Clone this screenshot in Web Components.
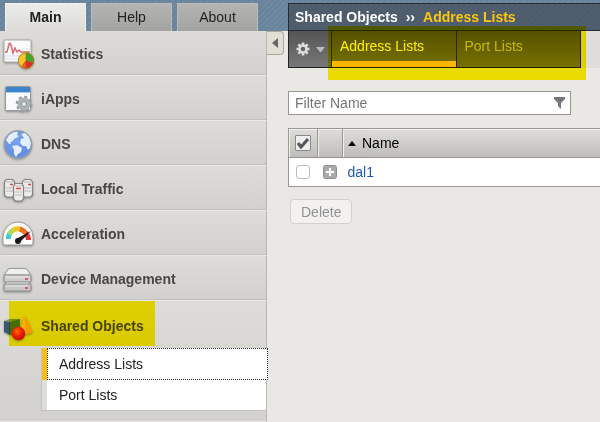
<!DOCTYPE html>
<html lang="en">
<head>
<meta charset="utf-8">
<meta name="viewport" content="width=device-width, initial-scale=1">
<title>Shared Objects - Address Lists</title>
<style>
  body {
    margin: 0;
    min-height: 100vh;
    font: 14px/18px "Liberation Sans", Arial, sans-serif;
    color: #222;
    background: #e9e8e4;
  }
</style>
</head>
<body>
<admin-shell>
  <side-tabs slot="side"></side-tabs>
  <side-nav slot="side">
    <nav-item label="Statistics" icon="statistics"></nav-item>
    <nav-item label="iApps" icon="iapps"></nav-item>
    <nav-item label="DNS" icon="dns"></nav-item>
    <nav-item label="Local Traffic" icon="traffic"></nav-item>
    <nav-item label="Acceleration" icon="acceleration"></nav-item>
    <nav-item label="Device Management" icon="device"></nav-item>
    <nav-item label="Shared Objects" icon="shared" open>
      <sub-link label="Address Lists" current></sub-link>
      <sub-link label="Port Lists"></sub-link>
    </nav-item>
  </side-nav>
  <page-header section="Shared Objects" page="Address Lists"></page-header>
  <page-menu></page-menu>
  <name-filter></name-filter>
  <object-table></object-table>
</admin-shell>

<script>
const icons = {
  statistics: `
    <rect x="2" y="4" width="27" height="22" rx="1" fill="#fafafa" stroke="#aaa"/>
    <path d="M3 20h25M3 23h25" stroke="#cfdcec"/>
    <path d="M3 16h2l2-8q1-2 2 1l2 8 2-5 2 4 2-2 2 2h9" fill="none" stroke="#dc6972" stroke-width="1.5"/>
    <circle cx="24" cy="24.5" r="8" fill="#f4c62b"/>
    <path d="M24 24.5V16.5a8 8 0 0 1 8 8a8 8 0 0 1-.6 2.5z" fill="#43a52e"/>
    <path d="M24 24.5l7.4 2.5a8 8 0 0 1-8.4 5.5z" fill="#da2f20"/>
    <path d="M24 24.5L19 31a8 8 0 0 0 5 1.5z" fill="#eb6022"/>
    <path d="M24 24.5V17M24 24.5l7 2M24 24.5L19 31" stroke="#8b5f13" stroke-width=".5"/>
    <circle cx="24" cy="24.5" r="7.7" fill="none" stroke="#a66b20" stroke-width=".7"/>`,
  iapps: `
    <rect x="3.5" y="5.5" width="25" height="24" rx="1" fill="#f8fafc" stroke="#999"/>
    <path d="M4 6h24v5H4z" fill="#3d84cc"/>
    <path d="M4 11h24v1H4z" fill="#a5c8e8"/>
    <circle cx="22" cy="23" r="7" fill="none" stroke="#929c9d" stroke-width="2.6" stroke-dasharray="2.9 2.6"/>
    <circle cx="22" cy="23" r="4.6" fill="#dde1df" stroke="#a9b3b3" stroke-width="4"/>
    <circle cx="22" cy="23" r="2.5" fill="#e3e7e7" stroke="#879394"/>`,
  dns: `
    <radialGradient id="sea" cx=".4" cy=".3" r=".8"><stop stop-color="#7ba4ef"/><stop offset="1" stop-color="#5a89e0"/></radialGradient>
    <circle cx="16" cy="18.5" r="13.5" fill="url(#sea)" stroke="#8a9cba" stroke-width="1.5"/>
    <path d="M4 14l3-5 5-3 4 0-1 3 2 1-3 2-2 1-2 3-2 0 1 2-2 0z" fill="#e4eefc"/>
    <path d="M10 20l5-1 5 3-1 4-3 2-2 3-2-3 0-4z" fill="#e4eefc"/>
    <path d="M19 8l4-1 4 4 2 6-1 5-2 2-2-4-3 0-3-3 1-4 3-1z" fill="#e4eefc"/>`,
  traffic: `
    <g fill="#ecebea" stroke="#858585" stroke-width="1.2">
      <path d="M2.500 11l2-2.500h6l2 2.500v13l-2 2h-6l-2-2z"/>
      <path d="M20.500 11l2-2.500h6l2 2.500v13l-2 2h-6l-2-2z"/>
      <path d="M11.500 15l2-2.500h6l2 2.500v13l-2 2h-6l-2-2z"/>
    </g>
    <path d="M4 11h7M4 17h7M4 20h7M22 11h7M22 17h7M22 20h7M13 15h7M13 21h7M13 24h7" stroke="#bbb"/>
    <path d="M8 13.500h3M26 13.500h3M14 17.500h5" stroke="#e14941" stroke-width="1.500"/>`,
  acceleration: `
    <path d="M1 27v-6a15 15 0 0 1 30 0v6l-1 2H2z" fill="#fdfdfd" stroke="#999"/>
    <g fill="none" stroke-width="5">
      <path d="M6.500 23a9.500 9.500 0 0 1 1-5" stroke="#46cad2"/>
      <path d="M7.500 18a9.500 9.500 0 0 1 4-4" stroke="#a6df55"/>
      <path d="M11.500 14a9.500 9.500 0 0 1 6-1" stroke="#f4c31c"/>
      <path d="M17.500 13a9.500 9.500 0 0 1 6 4" stroke="#f06f21"/>
      <path d="M23.500 17a9.500 9.500 0 0 1 3 7" stroke="#e63131"/>
    </g>
    <path d="M29 15L19 25a3 3 0 1 1-3-3z" fill="#171717"/>`,
  device: `
    <path d="M2 14l5-6.500h17l5 6.500z" fill="#efefee" stroke="#999"/>
    <rect x="2" y="14" width="27" height="7" rx="1.5" fill="#cfcfce" stroke="#8c8c8c"/>
    <path d="M2 23.500l3-2.500h21l3 2.500z" fill="#eee" stroke="#999"/>
    <rect x="2" y="23" width="27" height="7" rx="1.5" fill="#c7c7c6" stroke="#8c8c8c"/>
    <path d="M4 16h22M4 25h22" stroke="#e7e7e7"/>
    <path d="M23 18h3M23 27h3" stroke="#d9385b" stroke-width="1.5"/>`,
  shared: `
    <radialGradient id="ball" cx=".4" cy=".35" r=".65"><stop stop-color="#ff776a"/><stop offset=".5" stop-color="#ef2315"/><stop offset="1" stop-color="#c51108"/></radialGradient>
    <path d="M22.500 8Q23.500 8 24 10l7 14q-6 4-13 1l3.500-15z" fill="#f5a629"/>
    <path d="M22.500 8l1 17-5.500 0 3.500-15z" fill="#fbc13f"/>
    <path d="M2 13l6-2h10l-3 3z" fill="#6f9b6d"/>
    <path d="M2 13l6 1v13l-6-3z" fill="#39577c"/>
    <path d="M8 14l10-3v14l-10 2z" fill="#47733c"/>
    <circle cx="16.500" cy="25.500" r="6.800" fill="url(#ball)"/>`
};

// Attaches an open shadow root holding the given markup
function render(el, html) {
  el.attachShadow({ mode: 'open' }).innerHTML = html;
}

class AdminShell extends HTMLElement {
  constructor() {
    super();
    render(this, `
      <style>
        :host {
          display: flex;
          min-height: 100vh;
          background:
            repeating-linear-gradient(135deg, #69839c 0 2px, #6f89a1 2px 4px) 0 0 / 100% 31px no-repeat,
            #e9e8e4;
        }
        aside { flex: 0 0 267px; display: flex; flex-direction: column; }
        main { flex: 1; min-width: 0; padding: 3px 0 16px 4px; }
        button {
          flex: none;
          width: 17px;
          height: 24px;
          margin-top: 31px;
          padding: 0;
          border: 1px solid #aaa99f;
          border-left: 0;
          border-radius: 0 4px 4px 0;
          background: #e0dfd5;
        }
        svg { display: block; margin: auto; }
      </style>
      <aside><slot name="side"></slot></aside>
      <button aria-label="Collapse menu">
        <svg width="8" height="10"><path d="M7 0v10L1 5z" fill="#666"/></svg>
      </button>
      <main><slot></slot></main>
    `);
  }
}

class SideTabs extends HTMLElement {
  constructor() {
    super();
    render(this, `
      <style>
        :host { display: block; }
        nav { display: flex; gap: 5px; padding: 3px 9px 0 5px; }
        a {
          flex: 1;
          box-sizing: border-box;
          height: 28px;
          padding-top: 4px;
          border: 1px solid #b9bbba;
          border-bottom: 0;
          text-align: center;
          text-decoration: none;
          color: #222;
          background: linear-gradient(#b4b4b2, #a3a3a1);
        }
        .current {
          border-color: #f0f0ee;
          font-weight: bold;
          background: linear-gradient(#ebebe9, #dddcd8);
        }
      </style>
      <nav>
        <a class="current" href="#main">Main</a>
        <a href="#help">Help</a>
        <a href="#about">About</a>
      </nav>
    `);
  }
}

class SideNav extends HTMLElement {
  constructor() {
    super();
    render(this, `
      <style>
        :host { display: flex; flex-direction: column; flex: 1; }
      </style>
      <slot></slot>
    `);
  }
}

class NavItem extends HTMLElement {
  constructor() {
    super();
    const label = this.getAttribute('label');
    const icon = icons[this.getAttribute('icon')];
    const open = this.hasAttribute('open');

    render(this, `
      <style>
        :host {
          display: block;
          border-right: 1px solid #b8b7b3;
          border-bottom: 1px solid #e9e8e5;
          background: linear-gradient(#dddcd8, #d2d1cd);
          box-shadow: inset 0 -1px #c2c1bd;
        }
        :host([open]) { padding-bottom: 10px; box-shadow: none; }
        button {
          display: flex;
          align-items: center;
          gap: 5px;
          box-sizing: border-box;
          width: 100%;
          height: 44px;
          padding: 2px 0 0 2px;
          border: 0;
          background: none;
          font: inherit;
          font-weight: bold;
          color: #484743;
          text-align: left;
        }
        :host([open]) button { height: 47px; }
        svg { flex: none; filter: drop-shadow(0 1px 1px #0005); }
        .head { position: relative; }
        .marked::after {
          content: "";
          position: absolute;
          inset: 0 111px 2px 9px;
          background: #fff000;
          mix-blend-mode: multiply;
          pointer-events: none;
        }
        .sub { margin: 0 0 0 41px; border-bottom: 1px solid #c2c2bf; }
      </style>
      <div class="head ${open ? 'marked' : ''}">
        <button aria-expanded="${open}">
          <svg width="34" height="36" viewBox="0 0 34 36" aria-hidden="true">${icon}</svg>
          ${label}
        </button>
      </div>
      <div class="sub"><slot></slot></div>
    `);
    if (!open) this.shadowRoot.querySelector('.sub').remove();
  }
}

class SubLink extends HTMLElement {
  constructor() {
    super();
    render(this, `
      <style>
        :host { display: block; padding-left: 5px; border-left: 1px solid #c2c2bf; background: #dededc; }
        :host([current]) { margin-right: -2px; background: #fdbb12; }
        a {
          display: block;
          padding: 6px 11px;
          color: #222;
          text-decoration: none;
          background: #fff;
        }
        :host([current]) a { border: 1px dotted #333; }
        :host(:not([current])) a { padding-left: 12px; }
      </style>
      <a href="#">${this.getAttribute('label')}</a>
    `);
  }
}

class PageHeader extends HTMLElement {
  constructor() {
    super();
    render(this, `
      <style>
        :host { display: block; }
        h1 {
          display: flex;
          gap: 8px;
          margin: 0;
          padding: 4px 6px;
          border: 1px solid #222b36;
          border-right: 0;
          font-size: 14px;
          line-height: 18px;
          color: #fff;
          background: repeating-linear-gradient(135deg, #4d5b6b 0 2px, #505f70 2px 4px);
        }
        .page { color: #fdc70f; }
      </style>
      <h1>
        <span>${this.getAttribute('section')}</span>
        <span>››</span>
        <span class="page">${this.getAttribute('page')}</span>
      </h1>
    `);
  }
}

class PageMenu extends HTMLElement {
  constructor() {
    super();
    render(this, `
      <style>
        :host { display: block; background: #dedddb; }
        nav {
          display: flex;
          position: relative;
          box-sizing: border-box;
          width: 293px;
          max-width: 100%;
          height: 37px;
          border: 1px solid #222;
          border-top: 0;
          background: linear-gradient(#555, #777);
        }
        nav::after {
          content: "";
          position: absolute;
          inset: -5px -6px -13px 39px;
          background: #fff000;
          mix-blend-mode: multiply;
          pointer-events: none;
        }
        button {
          display: flex;
          align-items: center;
          gap: 6px;
          width: 43px;
          padding: 0 0 0 7px;
          border: 0;
          border-right: 1px solid #292929;
          background: none;
        }
        a {
          flex: 1;
          box-sizing: border-box;
          padding: 6px 8px 0;
          color: #c5c5c5;
          text-decoration: none;
        }
        .current {
          color: #fff;
          border-right: 1px solid #292929;
          box-shadow: inset 0 -6px #ffc000;
        }
      </style>
      <nav>
        <button aria-label="Options">
          <svg width="14" height="14" viewBox="-7 -7 14 14">
            <g stroke="#ddd" stroke-width="2.6">
              <path d="M0-6.500V-3M0 3V6.500M-6.500 0H-3M3 0H6.500M-4.600-4.600L-2.500-2.500M2.500 2.500L4.600 4.600M-4.600 4.600L-2.500 2.500M2.500-2.500L4.600-4.600"/>
            </g>
            <circle r="3.5" fill="none" stroke="#ddd" stroke-width="2.5"/>
          </svg>
          <svg width="9" height="5"><path d="M0 0h9L5 5H4z" fill="#bbb"/></svg>
        </button>
        <a class="current" href="#address">Address Lists</a>
        <a href="#port">Port Lists</a>
      </nav>
    `);
  }
}

class NameFilter extends HTMLElement {
  constructor() {
    super();
    render(this, `
      <style>
        :host { display: block; margin: 23px 0 13px; }
        div {
          display: flex;
          align-items: center;
          box-sizing: border-box;
          width: 283px;
          max-width: 100%;
          height: 24px;
          padding: 0 5px 0 6px;
          border: 1px solid #96968e;
          background: #fff;
        }
        input {
          flex: 1;
          min-width: 0;
          padding: 0;
          border: 0;
          outline: 0;
          font: inherit;
          background: none;
        }
        input::placeholder { color: #757575; }
      </style>
      <div>
        <input type="text" placeholder="Filter Name" aria-label="Filter Name">
        <svg width="11" height="12"><path d="M0 0h11v2L7 6v6L4 9V6L0 2z" fill="#777"/></svg>
      </div>
    `);
  }
}

class ObjectTable extends HTMLElement {
  constructor() {
    super();
    render(this, `
      <style>
        :host { display: block; }
        table {
          width: 100%;
          border-collapse: collapse;
          table-layout: fixed;
          border: 1px solid #999992;
          border-right: 0;
          background: #fff;
        }
        th, td { height: 28px; padding: 0; text-align: left; font-weight: normal; }
        thead tr { background: linear-gradient(#dedddb, #bdbcb8); }
        th {
          color: #000;
          border-bottom: 1px solid #96968e;
          border-right: 1px solid #96968e;
          box-shadow: inset 1px 1px #f0f0ee;
        }
        th:last-child { border-right: 0; }
        .check { width: 28px; }
        .icon { width: 24px; }
        .name { display: flex; align-items: center; gap: 6px; padding-left: 5px; }
        .row-name { padding-left: 5px; }
        a { color: #1d57b5; text-decoration: none; }
        input {
          appearance: none;
          display: block;
          box-sizing: border-box;
          width: 14px;
          height: 14px;
          margin: 0 auto;
          border: 1px solid #bbb;
          border-radius: 3px;
          background: #fff;
        }
        th input {
          width: 16px;
          height: 16px;
          border-color: #888;
          border-radius: 1px;
          background: #eee;
        }
        /* drawn tick lies over the native box */
        label { display: grid; place-items: center; }
        label > * { grid-area: 1 / 1; }
        label svg { z-index: 1; pointer-events: none; }
        td button { display: block; margin: auto; padding: 0; border: 0; background: none; }
        td svg { display: block; }
        .delete {
          height: 25px;
          margin: 12px 2px 0;
          padding: 0 10px;
          border: 1px solid #d2d1ce;
          border-radius: 4px;
          font: inherit;
          color: #929292;
          background: #f2f1ef;
        }
      </style>
      <table>
        <thead>
          <tr>
            <th class="check">
              <label>
                <input type="checkbox" aria-label="Select all" checked>
                <svg width="12" height="12"><path d="M1 6l3 4 7-8" fill="none" stroke="#555" stroke-width="3"/></svg>
              </label>
            </th>
            <th class="icon"></th>
            <th>
              <div class="name">
                <svg width="8" height="5"><path d="M4 0l4 5H0z"/></svg>
                Name
              </div>
            </th>
          </tr>
        </thead>
        <tbody>
          <tr>
            <td><input type="checkbox" aria-label="Select dal1"></td>
            <td>
              <button aria-label="Expand dal1">
                <svg width="14" height="14"><rect x=".5" y=".5" width="13" height="13" rx="2" fill="#aaa" stroke="#909090"/><path d="M7 3v8M3 7h8" stroke="#fff" stroke-width="2"/></svg>
              </button>
            </td>
            <td class="row-name"><a href="#dal1">dal1</a></td>
          </tr>
        </tbody>
      </table>
      <button class="delete" disabled>Delete</button>
    `);
  }
}

customElements.define('admin-shell', AdminShell);
customElements.define('side-tabs', SideTabs);
customElements.define('side-nav', SideNav);
customElements.define('nav-item', NavItem);
customElements.define('sub-link', SubLink);
customElements.define('page-header', PageHeader);
customElements.define('page-menu', PageMenu);
customElements.define('name-filter', NameFilter);
customElements.define('object-table', ObjectTable);
</script>
</body>
</html>
